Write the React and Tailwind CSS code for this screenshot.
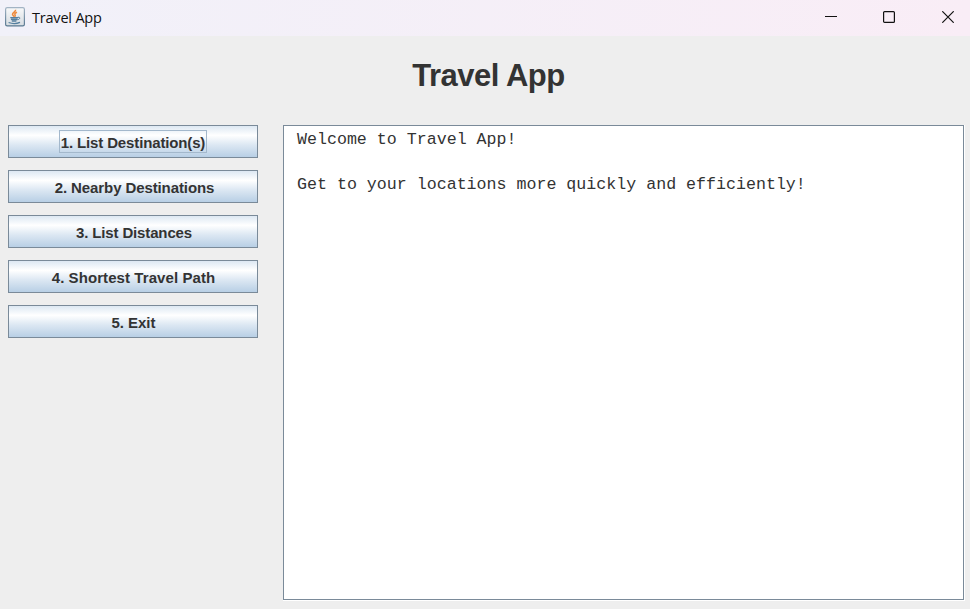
const actions = [
  { label: '1. List Destination(s)', text: 'h-[23px] border border-[#a3b8cc] px-px pt-px tracking-[-0.14px]' },
  { label: '2. Nearby Destinations', text: 'pt-[2px] pl-[3px] tracking-[-0.1px]' },
  { label: '3. List Distances', text: 'pt-[2px] pl-[2px] tracking-[-0.14px]' },
  { label: '4. Shortest Travel Path', text: 'pt-[2px] pl-px tracking-[0.08px]' },
  { label: '5. Exit', text: 'pt-[2px] pl-px tracking-[-0.05px]' },
];

function JavaIcon() {
  return (
    <svg width="20" height="20" viewBox="0 0 20 20" fill="none">
      <defs>
        <linearGradient id="tile" x1="0" y1="0" x2="0" y2="1">
          <stop offset="0" stopColor="#f8f9fa" />
          <stop offset="1" stopColor="#d6dce1" />
        </linearGradient>
        <linearGradient id="edge" x1="0" y1="0" x2="0" y2="1">
          <stop offset="0" stopColor="#a3b4c4" />
          <stop offset="1" stopColor="#587890" />
        </linearGradient>
      </defs>
      <rect x="0.6" y="0.6" width="18.8" height="18.3" rx="1.6" fill="url(#tile)" stroke="url(#edge)" strokeWidth="1.2" />
      <path d="M10.500 2.800c.8 1.800-3.200 2.600-3 4.500.1 1 1.200 1.400 1.500 2.400M12 5.200c-2 .9-2.700 1.700-1.900 2.700.4.6.2 1.300-.6 1.900" stroke="#ee8a3c" strokeWidth="1.500" />
      <path d="M5.400 10.200h7.600l-.5 2.300-1.500 1.700H7.300l-1.400-1.700z" fill="#7d9cb3" />
      <path d="M5.400 10.500h7.800M6 12.500h6.500M6.800 14.200h4.600M12.800 10.300c2.700-.7 2.700 1.900-.2 2.500" stroke="#557f9f" strokeWidth="1" />
      <path d="M3.600 15.500c3.500 1.300 8.500 1.100 11.400-.1" stroke="#557f9f" strokeWidth="1.200" />
    </svg>
  );
}

export default function App() {
  return (
    <div className="flex h-[609px] w-[970px] flex-col overflow-hidden bg-[#eeeeee] font-['Liberation_Sans',Arial,sans-serif] text-[#333333]">
      <header className="flex h-9 shrink-0 items-start bg-[linear-gradient(to_right,#f1f1f9,#f9edf6)] pl-[5px]">
        <div className="pt-[7px]"><JavaIcon /></div>
        <span className="ml-[7px] pt-[7px] font-['Open_Sans',sans-serif] text-[14.500px] leading-[22px] tracking-[-0.2px] text-[#111111]">Travel App</span>
        <div className="ml-auto flex pt-[11px] pr-4 text-[#111111]">
          <svg width="12" height="12" viewBox="0 0 12 12"><path d="M0 5.500h12" stroke="currentColor" /></svg>
          <svg className="ml-[46px]" width="12" height="12" viewBox="0 0 12 12"><rect x=".6" y=".6" width="10.800" height="10.800" rx="1" fill="none" stroke="currentColor" strokeWidth="1.200" /></svg>
          <svg className="ml-[47px]" width="12" height="12" viewBox="0 0 12 12"><path d="M.3.3l11.400 11.400M11.700.3L.3 11.700" stroke="currentColor" strokeWidth="1.200" /></svg>
        </div>
      </header>
      <h1 className="h-[89px] shrink-0 pt-5 pl-[7px] text-center text-[31px] leading-[40px] font-bold tracking-[-0.5px]">Travel App</h1>
      <main className="flex grow pr-[5px] pb-2 pl-2">
        <nav className="flex w-[250px] shrink-0 flex-col gap-3">
          {actions.map(({ label, text }) => (
            <button
              key={label}
              className="flex h-[33px] w-full items-center justify-center border border-[#7a8a99] bg-[linear-gradient(to_bottom,#dde8f3,#ffffff_30%,#dde8f3_60%,#b8cfe5)] text-[15px] leading-[21px] font-bold whitespace-nowrap"
            >
              <span className={text}>{label}</span>
            </button>
          ))}
        </nav>
        <div className="ml-[25px] grow border-r border-b border-white">
          <div className="h-full border border-[#7a8a99] bg-white pt-[3px] pl-[13px] font-['Liberation_Mono','Courier_New',monospace] text-[16.640px] leading-[22.500px]">
            <p>Welcome to Travel App!</p>
            <p className="mt-[22.500px]">Get to your locations more quickly and efficiently!</p>
          </div>
        </div>
      </main>
    </div>
  );
}
